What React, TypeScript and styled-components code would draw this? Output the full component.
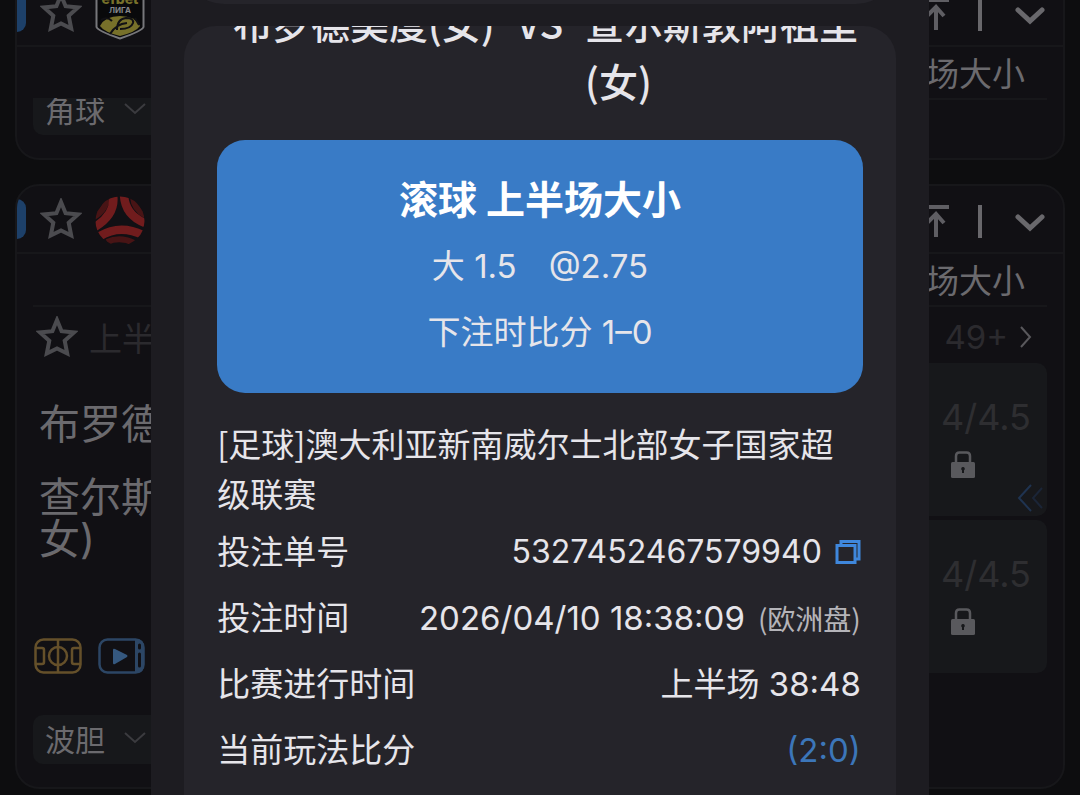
import React from "react";
import styled, { createGlobalStyle } from "styled-components";

const GlobalStyle = createGlobalStyle`
  *, *::before, *::after { box-sizing: border-box; }
  body {
    margin: 0;
    background: #0d0d0f;
    color: #e6e5ea;
    font-family: Inter, "Noto Sans CJK SC", sans-serif;
  }
  h2, h3, p, dl, dd, dt { margin: 0; font-weight: 400; }
  button {
    padding: 0;
    border: 0;
    background: none;
    color: inherit;
    font: inherit;
    cursor: pointer;
  }
  svg { display: block; flex: none; }
`;

const Screen = styled.div`
  position: relative;
  height: 100vh;
  overflow: hidden;
`;

/* ---------- match list behind the dialog ---------- */

const Feed = styled.main`
  display: flex;
  flex-direction: column;
  gap: 24px;
  margin: -23px 15px 0;
  color: #6b6a6e;
`;

const MatchCard = styled.article`
  border: 2px solid #17171a;
  border-radius: 24px;
  background: #111014;
  overflow: hidden;
`;

const MatchHeader = styled.header`
  display: flex;
  align-items: center;
  height: 68px;
  padding-right: 18px;
  border-bottom: 2px solid #17171a;
`;

const Accent = styled.span`
  width: 9px;
  height: 40px;
  margin-right: 14px;
  border-radius: 0 9px 9px 0;
  background: #1d4069;
`;

const LeagueMark = styled.span`
  margin-left: 13px;
  padding-top: 4px;
`;

const HeaderTools = styled.div`
  display: flex;
  align-items: center;
  margin-left: auto;
  padding-top: 4px;
`;

const ToolDivider = styled.span`
  width: 4px;
  height: 33px;
  margin: 0 33px 0 27px;
  background: #69686c;
`;

const ColumnTitle = styled.p`
  margin: 0 16px;
  padding: 4px 22px 0 0;
  border-bottom: 2px solid #17171a;
  font-size: 33px;
  line-height: 47px;
  text-align: right;
`;

const MatchBody = styled.div<{ $scrolled?: boolean }>`
  margin-top: ${(p) => (p.$scrolled ? "-2px" : "0")};
  padding: 0 16px 23px;
  overflow: hidden;
`;

const ScrolledRow = styled.div`
  margin-top: -12px;
`;

const Tab = styled.button`
  display: flex;
  align-items: center;
  gap: 19px;
  width: 180px;
  height: 49px;
  padding: 0 0 4px 12px;
  border-radius: 10px;
  background: #17181b;
  font-size: 30px;
`;

const InfoRow = styled.div`
  display: flex;
  align-items: center;
  height: 56px;
  padding: 4px 15px 0 3px;
  color: #2b2a2e;
  font-size: 33px;
`;

const Period = styled.span`
  margin-left: 11px;
`;

const MoreLink = styled.a`
  display: flex;
  align-items: center;
  gap: 12px;
  margin-left: auto;
  color: inherit;
  text-decoration: none;
`;

const Board = styled.div`
  display: grid;
  grid-template-columns: 1fr 168px;
  margin-bottom: 41px;
`;

const Teams = styled.div`
  display: flex;
  flex-direction: column;
  gap: 31px;
  padding: 40px 0 0 6px;
  font-size: 41px;
  line-height: 42px;
`;

const MediaRow = styled.div`
  display: flex;
  gap: 16px;
  margin: 47px 0 0 -5px;
`;

const OddsColumn = styled.div`
  display: flex;
  flex-direction: column;
  gap: 4px;
`;

const OddsCell = styled.button`
  display: flex;
  flex-direction: column;
  align-items: center;
  position: relative;
  height: 153px;
  padding: 32px 16px 0;
  border-radius: 10px;
  background: #17181b;
  color: #2e2e31;
  font-size: 36px;
  line-height: 44px;
`;

const Handicap = styled.span`
  align-self: flex-end;
  margin-bottom: 12px;
`;

const Expand = styled.span`
  position: absolute;
  right: 4px;
  bottom: 3px;
`;

/* ---------- bet detail dialog ---------- */

const Dialog = styled.div`
  position: absolute;
  inset: 0 14% 0 14%;
  display: flex;
  flex-direction: column;
  gap: 22px;
  padding: 0 33px;
  background: #1d1c21;
  overflow: hidden;
`;

const PreviousSlip = styled.div`
  flex: none;
  height: 80px;
  margin-top: -76px;
  border-radius: 40px;
  background: #25242a;
`;

const Slip = styled.section`
  flex: 1;
  min-height: 0;
  padding: 0 33px;
  border-radius: 32px 32px 0 0;
  background: #25242a;
  overflow: hidden;
`;

const Versus = styled.h2`
  display: flex;
  justify-content: center;
  gap: 22px;
  margin: -33px 0 31px;
  padding-left: 14px;
  font-family: "Noto Sans CJK SC", sans-serif;
  font-size: 39px;
  font-weight: 500;
  line-height: 58px;
`;

const TeamName = styled.span`
  max-width: 276px;
`;

const Selection = styled.div`
  padding: 27px 0 28px;
  border-radius: 28px;
  background: #397bc6;
  text-align: center;
  font-size: 33px;
  line-height: 66px;
`;

const Market = styled.h3`
  color: #fff;
  font-size: 39px;
  font-weight: 700;
  line-height: 66px;
`;

const Odds = styled.span`
  margin-left: 32px;
`;

const League = styled.p`
  margin: 25px 0 1px;
  font-family: "Noto Sans CJK SC", sans-serif;
  font-size: 33px;
  line-height: 50px;
`;

const Details = styled.dl`
  padding-right: 2px;
  font-size: 33px;
  line-height: 66px;
`;

const DetailRow = styled.div`
  display: flex;
  justify-content: space-between;
`;

const Value = styled.dd<{ $accent?: boolean }>`
  display: flex;
  align-items: center;
  gap: 13px;
  color: ${(p) => (p.$accent ? "#3c76b9" : "inherit")};
`;

const SlipNumber = styled.span`
  font-size: 32px;
`;

const Note = styled.small`
  color: #b5b4b9;
  font-family: "Noto Sans CJK SC", sans-serif;
  font-size: 28px;
`;

/* ---------- icons ---------- */

const Star = () => (
  <svg width="42" height="42" viewBox="0 0 42 42" fill="none" stroke="#4b4b4f" strokeWidth="4">
    <path d="M21 4l4.600 11.200 12.400 1.200-9.300 8.300 2.500 12.800L21 32.400 10.800 37.500l2.500-12.800L4 16.400l12.400-1.200z" />
  </svg>
);

const ToTop = () => (
  <svg width="34" height="34" viewBox="0 0 34 34" fill="none" stroke="#5f5e63" strokeWidth="4">
    <path d="M2 3h30M19 33V11M10 19l9-9 8 9" />
  </svg>
);

const Collapse = () => (
  <svg width="30" height="22" viewBox="0 0 30 22" fill="none" stroke="#69686c" strokeWidth="5" strokeLinecap="round">
    <path d="M3 7l12 11L27 7" />
  </svg>
);

const ThinDown = () => (
  <svg width="22" height="16" viewBox="0 0 22 16" fill="none" stroke="#3b3b3f" strokeWidth="2">
    <path d="M1 3l10 9L21 3" />
  </svg>
);

const ThinRight = () => (
  <svg width="12" height="22" viewBox="0 0 12 22" fill="none" stroke="#59585c" strokeWidth="2">
    <path d="M1 1l9 10-9 10" />
  </svg>
);

const Lock = () => (
  <svg width="24" height="27" viewBox="0 0 24 27">
    <path d="M5 12V5q0-3.500 3.500-3.500h7Q19 1.500 19 5v7" fill="none" stroke="#59595d" strokeWidth="2.500" />
    <rect x="0" y="11" width="24" height="16" rx="1.500" fill="#59595d" />
    <path d="M12 16a1.800 1.800 0 0 1 1 3.300V22h-2v-2.700a1.800 1.800 0 0 1 1-3.300z" fill="#17181b" />
  </svg>
);

const DoubleLeft = () => (
  <svg width="26" height="30" viewBox="0 0 26 30" fill="none" strokeWidth="2">
    <path d="M14 2L2 15l12 13" stroke="#1f3350" />
    <path d="M25 5l-9 10 9 10" stroke="#1b2537" />
  </svg>
);

const EfbetShield = () => (
  <svg width="50" height="52" viewBox="0 0 50 52">
    <path d="M1.500 1h47v38Q47 43 25 50.500 3 43 1.500 39z" fill="#09090b" stroke="#77777b" strokeWidth="2" />
    <text x="25" y="16" textAnchor="middle" fontFamily="Inter, sans-serif" fontSize="14" fontWeight="800" fill="#77702a">
      efbet
    </text>
    <text x="25" y="25" textAnchor="middle" fontFamily="Inter, sans-serif" fontSize="8" fontWeight="700" fill="#858589">
      ЛИГА
    </text>
    <path d="M5 38Q10 28 25 28t20 10Q41 44 25 48 9 44 5 38z" fill="#77702a" />
    <path d="M15 46q6-10 17-11M22 42q0-11 9-12 8 0 7 5-2 6-13 6M6 32q6-4 11 1M40 30l4 7" fill="none" stroke="#111014" strokeWidth="2" />
  </svg>
);

const RedSwirl = () => (
  <svg width="50" height="50" viewBox="0 0 50 50" fill="none">
    <clipPath id="swirl-disc">
      <circle cx="25" cy="25" r="24.500" />
    </clipPath>
    <g clipPath="url(#swirl-disc)">
      <g stroke="#481415" strokeWidth="6">
        <path d="M12 0Q12 13-1 21" />
        <path d="M38 1Q39 13 50 19" />
        <path d="M12 46q13-6 27 1" />
      </g>
      <g stroke="#711c1d" strokeWidth="8.500">
        <path d="M18-1Q21 18 0 31" />
        <path d="M29-1Q30 19 50 27" />
        <path d="M5 40q20-12 43-1" />
      </g>
    </g>
  </svg>
);

const Pitch = () => (
  <svg width="48" height="36" viewBox="0 0 48 36" fill="none" stroke="#65502a" strokeWidth="2.500">
    <rect x="1.500" y="1.500" width="45" height="33" rx="8" />
    <path d="M24 1v34M1 10h7q2 0 2 2v12q0 2-2 2H1M47 10h-7q-2 0-2 2v12q0 2 2 2h7" />
    <circle cx="24" cy="18" r="9" />
  </svg>
);

const Video = () => (
  <svg width="47" height="36" viewBox="0 0 47 36">
    <rect x="1.500" y="1.500" width="44" height="33" rx="8" fill="none" stroke="#2c4665" strokeWidth="2.500" />
    <path d="M37 1h3q6 1 6 8v18q0 7-6 8h-3z" fill="#2c4665" />
    <path d="M41.500 7v3M41.500 16v12" stroke="#111014" strokeWidth="3" strokeLinecap="round" />
    <path d="M15 12q0-2 2-1l12 6q1 1 0 2l-12 7q-2 1-2-1z" fill="#35587f" />
  </svg>
);

const Copy = () => (
  <svg width="26" height="26" viewBox="0 0 26 26" fill="none" stroke="#3f87dc" strokeWidth="3">
    <path d="M6 6V2.500h18V20h-4" />
    <rect x="2" y="6.500" width="18" height="17" />
  </svg>
);

/* ---------- composition ---------- */

const Header = ({ mark }: { mark: React.ReactNode }) => (
  <MatchHeader>
    <Accent />
    <button aria-label="收藏">
      <Star />
    </button>
    <LeagueMark>{mark}</LeagueMark>
    <HeaderTools>
      <button aria-label="置顶">
        <ToTop />
      </button>
      <ToolDivider />
      <button aria-label="收起">
        <Collapse />
      </button>
    </HeaderTools>
  </MatchHeader>
);

const MarketTab = ({ label }: { label: string }) => (
  <Tab>
    {label}
    <ThinDown />
  </Tab>
);

const Detail = ({ label, accent, children }: { label: string; accent?: boolean; children: React.ReactNode }) => (
  <DetailRow>
    <dt>{label}</dt>
    <Value $accent={accent}>{children}</Value>
  </DetailRow>
);

export default function App() {
  return (
    <>
      <GlobalStyle />
      <Screen>
        <Feed>
          <MatchCard>
            <Header mark={<EfbetShield />} />
            <ColumnTitle>场大小</ColumnTitle>
            <MatchBody $scrolled>
              <ScrolledRow>
                <MarketTab label="角球" />
              </ScrolledRow>
            </MatchBody>
          </MatchCard>

          <MatchCard>
            <Header mark={<RedSwirl />} />
            <ColumnTitle>场大小</ColumnTitle>
            <MatchBody>
              <InfoRow>
                <button aria-label="收藏">
                  <Star />
                </button>
                <Period>上半场</Period>
                <MoreLink href="#more">
                  49+
                  <ThinRight />
                </MoreLink>
              </InfoRow>
              <Board>
                <Teams>
                  <p>布罗德</p>
                  <p>
                    查尔斯
                    <br />
                    女)
                  </p>
                  <MediaRow>
                    <button aria-label="赛况">
                      <Pitch />
                    </button>
                    <button aria-label="视频">
                      <Video />
                    </button>
                  </MediaRow>
                </Teams>
                <OddsColumn>
                  <OddsCell>
                    <Handicap>4/4.5</Handicap>
                    <Lock />
                    <Expand>
                      <DoubleLeft />
                    </Expand>
                  </OddsCell>
                  <OddsCell>
                    <Handicap>4/4.5</Handicap>
                    <Lock />
                  </OddsCell>
                </OddsColumn>
              </Board>
              <MarketTab label="波胆" />
            </MatchBody>
          </MatchCard>
        </Feed>

        <Dialog role="dialog" aria-label="注单详情">
          <PreviousSlip />
          <Slip>
            <Versus>
              <TeamName>布罗德美度(女)</TeamName>
              <span>VS</span>
              <TeamName>查尔斯敦阿祖里(女)</TeamName>
            </Versus>
            <Selection>
              <Market>滚球 上半场大小</Market>
              <p>
                大 1.5<Odds>@2.75</Odds>
              </p>
              <p>下注时比分 1–0</p>
            </Selection>
            <League>[足球]澳大利亚新南威尔士北部女子国家超级联赛</League>
            <Details>
              <Detail label="投注单号">
                <SlipNumber>5327452467579940</SlipNumber>
                <button aria-label="复制">
                  <Copy />
                </button>
              </Detail>
              <Detail label="投注时间">
                2026/04/10 18:38:09
                <Note>(欧洲盘)</Note>
              </Detail>
              <Detail label="比赛进行时间">上半场 38:48</Detail>
              <Detail label="当前玩法比分" accent>
                (2:0)
              </Detail>
            </Details>
          </Slip>
        </Dialog>
      </Screen>
    </>
  );
}
